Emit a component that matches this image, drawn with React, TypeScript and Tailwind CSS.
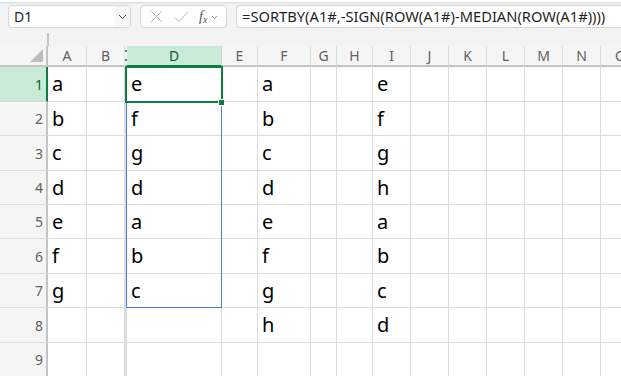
import React from "react";

const cols = [
  { name: "A", w: 39 },
  { name: "B", w: 38 },
  { name: "C", w: 2, hidden: true },
  { name: "D", w: 95 },
  { name: "E", w: 36 },
  { name: "F", w: 53 },
  { name: "G", w: 26 },
  { name: "H", w: 36 },
  { name: "I", w: 38 },
  { name: "J", w: 38 },
  { name: "K", w: 38 },
  { name: "L", w: 38 },
  { name: "M", w: 38 },
  { name: "N", w: 38 },
  { name: "O", w: 40 },
];

const rowHeights = [35, 34, 35, 34, 34, 35, 34, 35, 34];

const data: Record<string, string[]> = {
  A: ["a", "b", "c", "d", "e", "f", "g"],
  D: ["e", "f", "g", "d", "a", "b", "c"],
  F: ["a", "b", "c", "d", "e", "f", "g", "h"],
  I: ["e", "f", "g", "h", "a", "b", "c", "d"],
};

const font = { fontFamily: '"Noto Sans", "Open Sans", sans-serif' };

export default function App() {
  return (
    <div
      className="relative w-[621px] h-[376px] overflow-hidden bg-white"
      style={font}
    >
      {/* formula bar area */}
      <div className="relative h-[46px] bg-[#f3f3f3]">
        <div className="absolute left-0 right-0 top-0 h-[2px] bg-white shadow-[0_1px_2px_rgba(0,0,0,0.12)]" />
        <div className="flex items-start pt-[5px] pl-[8px] gap-[9px]">
          {/* name box */}
          <div className="flex h-[23px] w-[123px] rounded-[4px] border border-[#d6d6d6] bg-white overflow-hidden">
            <div className="flex-1 flex items-center pl-[5px] text-[14px] text-[#1f1f1f]">D1</div>
            <div className="w-[15px] flex items-center justify-center bg-[#f7f7f7]">
              <svg width="9" height="6" viewBox="0 0 9 6">
                <path d="M1 1l3.5 3.5L8 1" fill="none" stroke="#444" strokeWidth="1" />
              </svg>
            </div>
          </div>
          {/* fx box */}
          <div className="flex items-center h-[23px] w-[87px] rounded-[4px] border border-[#d6d6d6] bg-white pl-[9px]">
            <svg width="13" height="13" viewBox="0 0 13 13">
              <path d="M1 1l11 11M12 1L1 12" stroke="#b8b8b8" strokeWidth="1" fill="none" />
            </svg>
            <svg width="15" height="12" viewBox="0 0 15 12" className="ml-[11px]">
              <path d="M1 6.5l4 4L14 1" stroke="#b8b8b8" strokeWidth="1" fill="none" />
            </svg>
            <span
              className="ml-[10px] text-[14px] text-[#555] italic leading-none"
              style={{ fontFamily: '"Liberation Serif", serif' }}
            >
              f<sub className="text-[10px]">x</sub>
            </span>
            <svg width="7" height="5" viewBox="0 0 7 5" className="ml-[4px] mt-[2px]">
              <path d="M1 1l2.5 2.5L6 1" fill="none" stroke="#999" strokeWidth="1" />
            </svg>
          </div>
          {/* formula box */}
          <div className="flex-1 flex items-center h-[23px] rounded-l-[4px] border border-r-0 border-[#d6d6d6] bg-white pl-[5px] text-[14.7px] text-[#1f1f1f] whitespace-nowrap">
            =SORTBY(A1#,-SIGN(ROW(A1#)-MEDIAN(ROW(A1#))))
          </div>
        </div>
        <div className="absolute left-[47px] top-[33px] w-[2px] h-[13px] bg-[#c4c4c4]" />
      </div>

      {/* grid */}
      <div className="relative">
        <div
          className="grid"
          style={{
            gridTemplateColumns: `48px ${cols.map((c) => c.w + "px").join(" ")}`,
          }}
        >
          {/* header row */}
          <div className="relative h-[21px] bg-[#f5f5f5] border-b-2 border-r-2 border-[#c4c4c4]">
            <svg width="13" height="13" viewBox="0 0 13 13" className="absolute right-[3px] bottom-[3px]">
              <path d="M13 0V13H0Z" fill="#bdbdbd" />
            </svg>
          </div>
          {cols.map((c) =>
            c.hidden ? (
              <div key={c.name} className="h-[21px] bg-[#f5f5f5] border-b-2 border-[#c4c4c4] flex flex-col justify-between py-[4px]">
                <div className="h-[2px] w-[2px] bg-[#777]" />
                <div className="h-[2px] w-[2px] bg-[#777]" />
              </div>
            ) : c.name === "D" ? (
              <div
                key={c.name}
                className="h-[21px] bg-[#caead8] border-b-2 border-[#107c41] border-r border-r-[#d4d4d4] flex items-center justify-center text-[14px] text-[#0e5c31]"
              >
                {c.name}
              </div>
            ) : (
              <div
                key={c.name}
                className="h-[21px] bg-[#f5f5f5] border-b-2 border-[#c4c4c4] border-r border-r-[#dcdcdc] flex items-center justify-center text-[14px] text-[#616161]"
              >
                {c.name}
              </div>
            )
          )}
          {rowHeights.map((h, ri) => (
            <React.Fragment key={ri}>
              <div
                className={
                  ri === 0
                    ? "bg-[#caead8] border-r-2 border-[#107c41] border-b border-b-[#d4d4d4] flex items-center justify-end pr-[3px] text-[14px] text-[#0e5c31]"
                    : "bg-[#f5f5f5] border-r-2 border-[#c4c4c4] border-b border-b-[#dcdcdc] flex items-center justify-end pr-[3px] text-[14px] text-[#616161]"
                }
                style={{ height: h }}
              >
                {ri + 1}
              </div>
              {cols.map((c) => (
                <div
                  key={c.name}
                  className={
                    c.hidden
                      ? "border-l border-r border-b border-[#dcdcdc]"
                      : "border-r border-b border-[#dcdcdc] flex items-center pl-[4px] text-[20px] text-black leading-none overflow-hidden"
                  }
                  style={{ height: h }}
                >
                  {data[c.name]?.[ri] ?? ""}
                </div>
              ))}
            </React.Fragment>
          ))}
        </div>
        {/* spill range border D1:D7 */}
        <div className="absolute left-[126px] top-[21px] w-[96px] h-[241px] border border-[#4a7fd4] pointer-events-none" />
        {/* active cell */}
        <div className="absolute left-[125px] top-[20px] w-[98px] h-[37px] border-2 border-[#107c41] pointer-events-none" />
        <div className="absolute left-[218px] top-[53px] w-[7px] h-[7px] bg-[#107c41] border border-white pointer-events-none" />
      </div>
    </div>
  );
}
